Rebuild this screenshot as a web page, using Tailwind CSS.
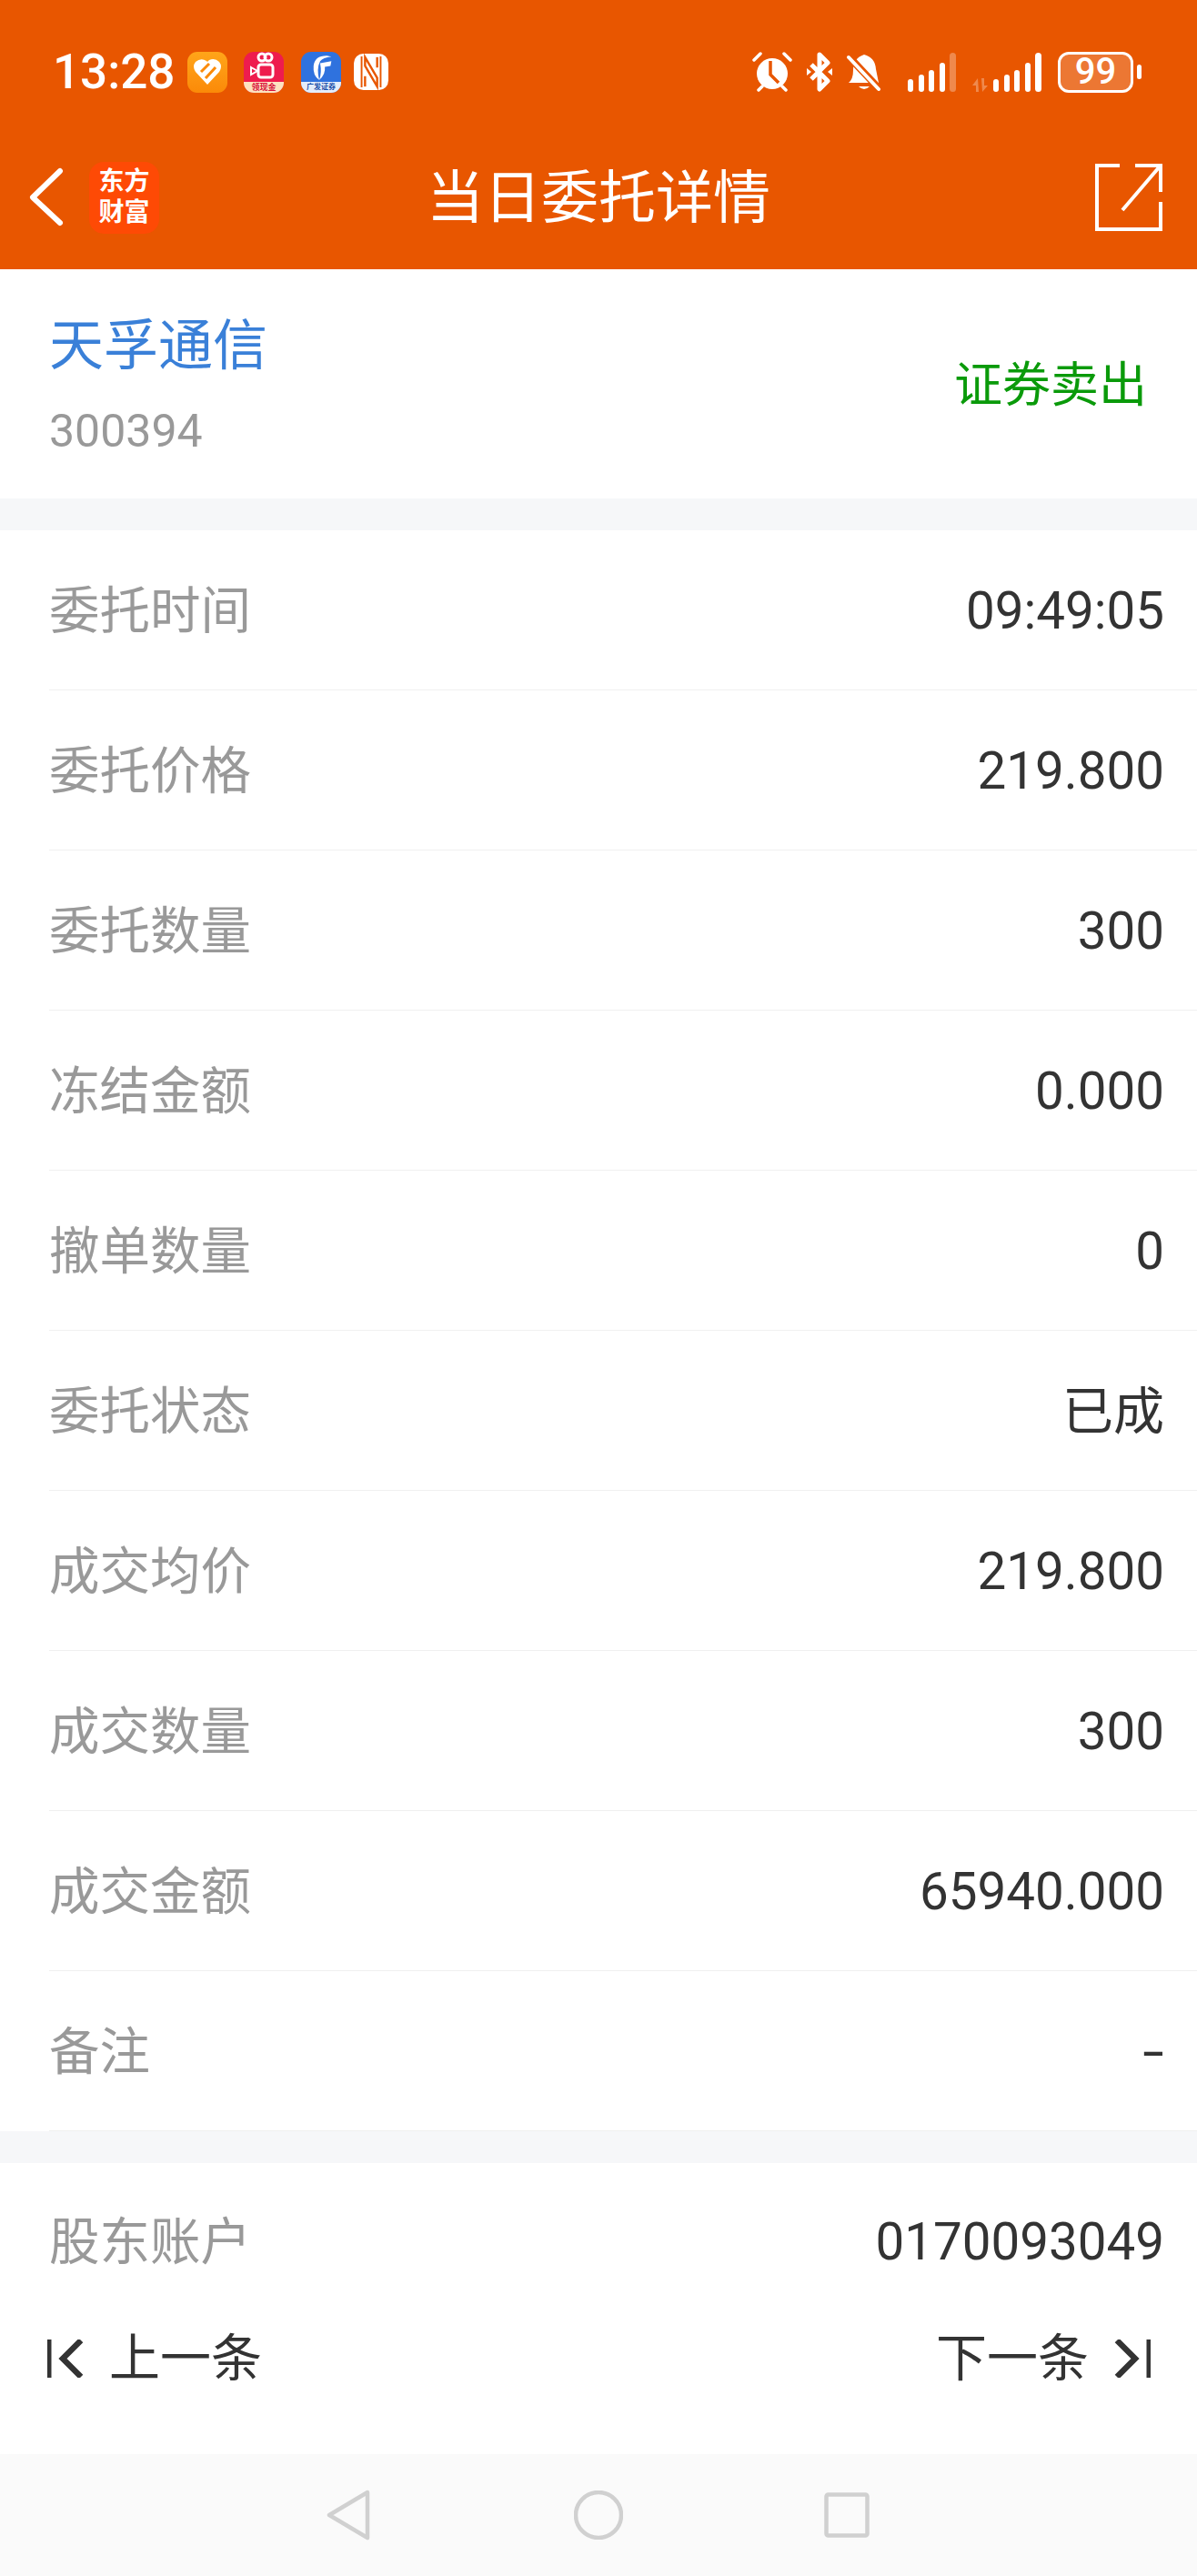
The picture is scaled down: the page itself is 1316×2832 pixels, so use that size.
<!DOCTYPE html>
<html lang="zh">
<head>
<meta charset="utf-8">
<script src="https://cdn.jsdelivr.net/npm/@tailwindcss/browser@4"></script>
</head>
<body class="m-0">
<div class="w-[1316px] h-[2832px] bg-white flex flex-col overflow-hidden font-['Roboto','Noto_Sans_CJK_SC',sans-serif]">
  <!-- status bar -->
  <div class="bg-[#e85600] h-[296px] shrink-0 flex flex-col">
    <div class="h-[150px] pt-[8px] flex items-center justify-between pl-[58px] pr-[61px]">
      <div class="flex items-center">
        <span class="text-white text-[53px] font-medium leading-none w-[148px] whitespace-nowrap">13:28</span>
        <div class="flex items-center">
          <div class="w-[44px] h-[45px] rounded-[11px] bg-gradient-to-b from-[#ffa519] to-[#fb8a08] flex items-center justify-center">
            <svg width="32" height="30" viewBox="0 0 32 30"><path d="M16 29 L3 15 Q-1 9 3 4 Q9 -1 15 3 L16 4 L18 2 Q24 -1 29 4 Q33 9 29 15 Z" fill="#fff"/><path d="M9 15 L18 6 M14 22 L25 10" stroke="#fb8a08" stroke-width="3"/></svg>
          </div>
          <div class="w-[44px] h-[45px] rounded-[11px] bg-[#ee1c4e] ml-[18px] overflow-hidden flex flex-col items-center">
            <svg width="38" height="33" viewBox="0 0 38 33" class="shrink-0"><circle cx="17" cy="6" r="4" fill="none" stroke="#fff" stroke-width="3"/><circle cx="24" cy="6" r="4" fill="none" stroke="#fff" stroke-width="3"/><rect x="13" y="14" width="16" height="14" rx="3" fill="none" stroke="#fff" stroke-width="3"/><path d="M5 17 L12 21 L5 25 Z" fill="none" stroke="#fff" stroke-width="2"/></svg>
            <div class="w-full flex-1 bg-[#fde3c0] text-[#d8143c] text-[9px] leading-[12px] font-bold text-center whitespace-nowrap">领现金</div>
          </div>
          <div class="w-[44px] h-[45px] rounded-[11px] bg-[#2f72de] ml-[19px] overflow-hidden flex flex-col items-center">
            <svg width="34" height="33" viewBox="0 0 32 32" class="shrink-0"><path d="M22 4 Q9 4 8 15 Q7 25 14 30 Q11 18 15 10 Q18 6 27 5 Z M15 12 L27 10 L26 15 L20 16 Q21 24 14 30 Q17 22 15 12 Z" fill="#fff"/></svg>
            <div class="w-full flex-1 bg-[#e4edfb] text-[#1d4fa8] text-[8px] leading-[12px] font-bold text-center whitespace-nowrap">广发证券</div>
          </div>
          <svg width="38" height="40" viewBox="0 0 40 42" class="ml-[14px]"><rect x="0" y="0" width="40" height="42" rx="11" fill="#fff"/><path d="M9 3 V39 M31 3 V39" stroke="#e85600" stroke-width="2"/><path d="M13 4 L27 28 V38 L13 14 Z" fill="none" stroke="#e85600" stroke-width="2.5"/><path d="M27 4 V16" stroke="#e85600" stroke-width="2.5"/><path d="M13 26 V38" stroke="#e85600" stroke-width="2.5"/></svg>
        </div>
      </div>
      <div class="flex items-center">
        <!-- alarm -->
        <svg width="44" height="44" viewBox="0 0 44 44"><circle cx="22" cy="24" r="17" fill="#fff"/><path d="M20 10 V25 L29 34" fill="none" stroke="#e85600" stroke-width="3.5"/><path d="M2 9 L9 2 M42 9 L35 2" stroke="#fff" stroke-width="3.5" stroke-linecap="round"/><path d="M7 42 L11 38 M37 42 L33 38" stroke="#fff" stroke-width="3.5" stroke-linecap="round"/></svg>
        <!-- bluetooth -->
        <svg width="30" height="44" viewBox="0 0 30 44" class="ml-[15px]"><path d="M6 14 L24 32 L15 41 V3 L24 12 L6 30" fill="none" stroke="#fff" stroke-width="5" stroke-linejoin="round"/><path d="M1 18 L6 22 L1 26 Z M29 18 L24 22 L29 26 Z" fill="#fff"/></svg>
        <!-- muted bell -->
        <svg width="38" height="44" viewBox="0 0 38 44" class="ml-[15px]"><path d="M19 3 Q31 6 32 19 L35 34 H2 Q7 30 7 20 Q7 7 19 3 Z" fill="#fff"/><path d="M13 38 Q19 44 25 38 Z" fill="#fff"/><path d="M3 6 L34 39" stroke="#e85600" stroke-width="8"/><path d="M2 6 L35 41" stroke="#fff" stroke-width="4" stroke-linecap="round"/></svg>
        <!-- signal 1 -->
        <svg width="53" height="43" viewBox="0 0 53 43" class="ml-[29px]"><g fill="#fff"><rect x="0" y="29" width="6" height="14" rx="3"/><rect x="12" y="24" width="6" height="19" rx="3"/><rect x="23" y="19" width="6" height="24" rx="3"/><rect x="35" y="11" width="6" height="32" rx="3"/><rect x="46" y="0" width="7" height="43" rx="3.5" fill-opacity=".3"/></g></svg>
        <!-- signal 2 -->
        <svg width="76" height="43" viewBox="0 0 76 43" class="ml-[18px]"><path d="M6 28 L0 36 H4 V43 H7 Z M10 28 H13 V36 H17 L11 43 Z" fill="#fff" fill-opacity=".3"/><g fill="#fff"><rect x="23" y="29" width="6" height="14" rx="3"/><rect x="35" y="24" width="6" height="19" rx="3"/><rect x="46" y="19" width="6" height="24" rx="3"/><rect x="58" y="11" width="6" height="32" rx="3"/><rect x="69" y="0" width="7" height="43" rx="3.5"/></g></svg>
        <!-- battery -->
        <div class="flex items-center ml-[18px]">
          <div class="w-[83px] h-[45px] rounded-[12px] border-[3px] border-white bg-white/20 flex items-center justify-center text-white text-[40px] leading-none font-medium">99</div>
          <div class="w-[5px] h-[16px] rounded-[3px] bg-white ml-[4px]"></div>
        </div>
      </div>
    </div>
    <div class="h-[134px] flex items-center justify-between relative">
      <div class="flex items-center pl-[30px]">
        <svg width="40" height="66" viewBox="0 0 40 66"><path d="M36 4 L6 33 L36 61" fill="none" stroke="#fff" stroke-width="6" stroke-linecap="round" stroke-linejoin="round"/></svg>
        <div class="w-[77px] h-[79px] rounded-[16px] bg-[#fe4a05] ml-[28px] flex flex-col items-center justify-center text-white text-[28px] leading-[34px] font-bold">
          <span>东方</span><span>财富</span>
        </div>
      </div>
      <div class="absolute left-0 right-0 text-center text-white text-[63px] leading-none">当日委托详情</div>
      <svg width="74" height="74" viewBox="0 0 74 74" class="mr-[38px]"><path d="M27 2 H2 V72 H72 V42 M30 51 L71 3 M44 2 H72 V31" fill="none" stroke="#fff" stroke-width="4"/></svg>
    </div>
  </div>

  <!-- stock -->
  <div class="h-[252px] shrink-0 flex items-center justify-between pl-[54px] pr-[55px]">
    <div class="flex flex-col pt-[5px]">
      <span class="text-[#3a80d8] text-[60px] leading-[70px]">天孚通信</span>
      <span class="text-[#999] text-[50px] leading-[58px] mt-[29px]">300394</span>
    </div>
    <span class="text-[#0a9a0a] text-[53px] leading-none mt-[4px]">证券卖出</span>
  </div>
  <div class="h-[35px] shrink-0 bg-[#f6f7f9]"></div>

  <!-- rows -->
  <div class="flex flex-col shrink-0">
    <div class="h-[176px] pt-[2px] flex items-center justify-between pl-[54px] pr-[36px] relative text-[56.5px]"><span class="text-[#999] text-[55.5px] mt-[2px]">委托时间</span><span class="text-[#333]">09:49:05</span><div class="absolute left-[54px] right-0 bottom-0 h-[1px] bg-[#f0f0f0]"></div></div>
    <div class="h-[176px] pt-[2px] flex items-center justify-between pl-[54px] pr-[36px] relative text-[56.5px]"><span class="text-[#999] text-[55.5px] mt-[2px]">委托价格</span><span class="text-[#333]">219.800</span><div class="absolute left-[54px] right-0 bottom-0 h-[1px] bg-[#f0f0f0]"></div></div>
    <div class="h-[176px] pt-[2px] flex items-center justify-between pl-[54px] pr-[36px] relative text-[56.5px]"><span class="text-[#999] text-[55.5px] mt-[2px]">委托数量</span><span class="text-[#333]">300</span><div class="absolute left-[54px] right-0 bottom-0 h-[1px] bg-[#f0f0f0]"></div></div>
    <div class="h-[176px] pt-[2px] flex items-center justify-between pl-[54px] pr-[36px] relative text-[56.5px]"><span class="text-[#999] text-[55.5px] mt-[2px]">冻结金额</span><span class="text-[#333]">0.000</span><div class="absolute left-[54px] right-0 bottom-0 h-[1px] bg-[#f0f0f0]"></div></div>
    <div class="h-[176px] pt-[2px] flex items-center justify-between pl-[54px] pr-[36px] relative text-[56.5px]"><span class="text-[#999] text-[55.5px] mt-[2px]">撤单数量</span><span class="text-[#333]">0</span><div class="absolute left-[54px] right-0 bottom-0 h-[1px] bg-[#f0f0f0]"></div></div>
    <div class="h-[176px] pt-[2px] flex items-center justify-between pl-[54px] pr-[36px] relative text-[56.5px]"><span class="text-[#999] text-[55.5px] mt-[2px]">委托状态</span><span class="text-[#333] text-[56px]">已成</span><div class="absolute left-[54px] right-0 bottom-0 h-[1px] bg-[#f0f0f0]"></div></div>
    <div class="h-[176px] pt-[2px] flex items-center justify-between pl-[54px] pr-[36px] relative text-[56.5px]"><span class="text-[#999] text-[55.5px] mt-[2px]">成交均价</span><span class="text-[#333]">219.800</span><div class="absolute left-[54px] right-0 bottom-0 h-[1px] bg-[#f0f0f0]"></div></div>
    <div class="h-[176px] pt-[2px] flex items-center justify-between pl-[54px] pr-[36px] relative text-[56.5px]"><span class="text-[#999] text-[55.5px] mt-[2px]">成交数量</span><span class="text-[#333]">300</span><div class="absolute left-[54px] right-0 bottom-0 h-[1px] bg-[#f0f0f0]"></div></div>
    <div class="h-[176px] pt-[2px] flex items-center justify-between pl-[54px] pr-[36px] relative text-[56.5px]"><span class="text-[#999] text-[55.5px] mt-[2px]">成交金额</span><span class="text-[#333]">65940.000</span><div class="absolute left-[54px] right-0 bottom-0 h-[1px] bg-[#f0f0f0]"></div></div>
    <div class="h-[176px] pt-[2px] flex items-center justify-between pl-[54px] pr-[36px] relative text-[56.5px]"><span class="text-[#999] text-[55.5px] mt-[2px]">备注</span><span class="text-[#333] inline-block scale-x-[1.5] origin-right">-</span><div class="absolute left-[54px] right-0 bottom-0 h-[1px] bg-[#f0f0f0]"></div></div>
  </div>
  <div class="h-[35px] shrink-0 bg-[#f6f7f9]"></div>

  <!-- account + prev/next -->
  <div class="h-[150px] pt-[24px] shrink-0 flex items-center justify-between pl-[54px] pr-[36px]"><span class="text-[#999] text-[55.5px] mt-[2px]">股东账户</span><span class="text-[#333] text-[56.5px]">0170093049</span></div>
  <div class="h-[130px] shrink-0 flex items-center justify-between pl-[52px] pr-[51px] text-[#333] text-[56px]">
    <div class="flex items-center">
      <svg width="40" height="42" viewBox="0 0 40 42"><path d="M2 0 V42" stroke="#333" stroke-width="5"/><path d="M37 1 L17 21 L37 41" fill="none" stroke="#333" stroke-width="6.5"/></svg>
      <span class="ml-[28px]">上一条</span>
    </div>
    <div class="flex items-center">
      <span>下一条</span>
      <svg width="40" height="42" viewBox="0 0 40 42" class="ml-[28px]"><path d="M38 0 V42" stroke="#333" stroke-width="5"/><path d="M3 1 L23 21 L3 41" fill="none" stroke="#333" stroke-width="6.5"/></svg>
    </div>
  </div>
  <div class="h-[40px] shrink-0"></div>

  <!-- nav bar -->
  <div class="flex-1 bg-[#fafafa] flex items-center pl-[359px]">
    <svg width="48" height="56" viewBox="0 0 48 56"><path d="M45 3 L3 28 L45 53 Z" fill="none" stroke="#d0d0d0" stroke-width="4.5" stroke-linejoin="round"/></svg>
    <svg width="54" height="54" viewBox="0 0 54 54" class="ml-[224px]"><circle cx="27" cy="27" r="25" fill="none" stroke="#d0d0d0" stroke-width="4.5"/></svg>
    <svg width="50" height="50" viewBox="0 0 50 50" class="ml-[221px]"><rect x="2.5" y="2.5" width="45" height="45" rx="2" fill="none" stroke="#d0d0d0" stroke-width="4.5"/></svg>
  </div>
</div>
</body>
</html>
